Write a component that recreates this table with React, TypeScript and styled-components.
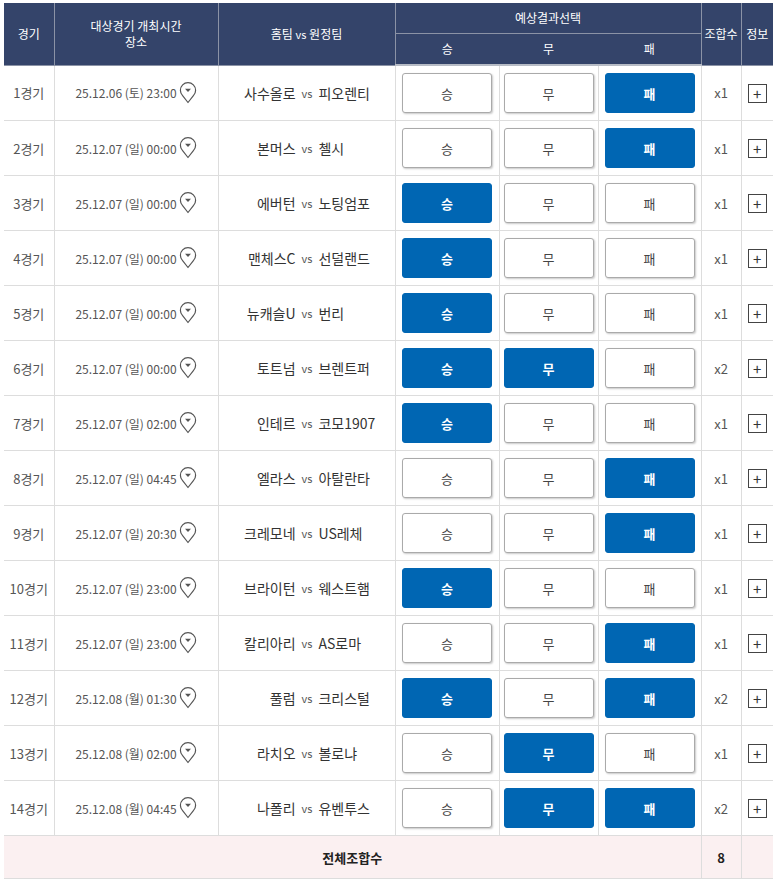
import React from "react";
import styled, { createGlobalStyle } from "styled-components";

type Pick = "win" | "draw" | "lose";

interface Match {
  no: number;
  date: string;
  home: string;
  away: string;
  picks: Pick[];
}

const matches: Match[] = [
  { no: 1, date: "25.12.06 (토) 23:00", home: "사수올로", away: "피오렌티", picks: ["lose"] },
  { no: 2, date: "25.12.07 (일) 00:00", home: "본머스", away: "첼시", picks: ["lose"] },
  { no: 3, date: "25.12.07 (일) 00:00", home: "에버턴", away: "노팅엄포", picks: ["win"] },
  { no: 4, date: "25.12.07 (일) 00:00", home: "맨체스C", away: "선덜랜드", picks: ["win"] },
  { no: 5, date: "25.12.07 (일) 00:00", home: "뉴캐슬U", away: "번리", picks: ["win"] },
  { no: 6, date: "25.12.07 (일) 00:00", home: "토트넘", away: "브렌트퍼", picks: ["win", "draw"] },
  { no: 7, date: "25.12.07 (일) 02:00", home: "인테르", away: "코모1907", picks: ["win"] },
  { no: 8, date: "25.12.07 (일) 04:45", home: "엘라스", away: "아탈란타", picks: ["lose"] },
  { no: 9, date: "25.12.07 (일) 20:30", home: "크레모네", away: "US레체", picks: ["lose"] },
  { no: 10, date: "25.12.07 (일) 23:00", home: "브라이턴", away: "웨스트햄", picks: ["win"] },
  { no: 11, date: "25.12.07 (일) 23:00", home: "칼리아리", away: "AS로마", picks: ["lose"] },
  { no: 12, date: "25.12.08 (월) 01:30", home: "풀럼", away: "크리스털", picks: ["win", "lose"] },
  { no: 13, date: "25.12.08 (월) 02:00", home: "라치오", away: "볼로냐", picks: ["draw"] },
  { no: 14, date: "25.12.08 (월) 04:45", home: "나폴리", away: "유벤투스", picks: ["draw", "lose"] },
];

const options: { key: Pick; label: string }[] = [
  { key: "win", label: "승" },
  { key: "draw", label: "무" },
  { key: "lose", label: "패" },
];

const GlobalStyle = createGlobalStyle`
  body {
    margin: 0;
    padding: 3px 0 0 4px;
    background: #ffffff;
    font-family: "Noto Sans CJK KR", "Noto Sans", sans-serif;
  }
`;

const Table = styled.table`
  width: 769px;
  border-collapse: collapse;
  table-layout: fixed;
  font-size: 13px;
  color: #333;
`;

const HeadCell = styled.th<{ $first?: boolean }>`
  background: #34446a;
  color: #ffffff;
  font-weight: normal;
  font-size: 12px;
  line-height: 16px;
  height: 30px;
  padding: 0;
  border-left: 1px solid #8b93a6;
  border-bottom: 1px solid #8b93a6;
  text-align: center;
  vertical-align: middle;

  &:first-child {
    border-left: ${(p) => (p.$first ? "1px solid #8b93a6" : "none")};
  }
`;

const SubHeadCell = styled(HeadCell)`
  border-left: none;
  border-bottom: 2px solid #b7bcc6;
`;

const Cell = styled.td`
  height: 54px;
  padding: 0;
  border-left: 1px solid #dddddd;
  border-bottom: 1px solid #dddddd;
  text-align: center;
  vertical-align: middle;

  &:first-child {
    border-left: none;
  }
`;

const GameNo = styled(Cell)`
  color: #555;
  font-size: 13px;
`;

const DateText = styled.span`
  display: inline-flex;
  align-items: center;
  gap: 2px;
  color: #555;
  font-size: 12px;
`;

const Teams = styled.div`
  display: grid;
  grid-template-columns: 1fr auto 1fr;
  align-items: center;
  column-gap: 6px;
  color: #333;
  font-size: 14px;
  padding-left: 1px;
`;

const Home = styled.span`
  text-align: right;
  white-space: nowrap;
`;

const Away = styled.span`
  text-align: left;
  white-space: nowrap;
`;

const Vs = styled.span`
  color: #555;
  font-size: 11px;
`;

const PickButton = styled.button<{ $active: boolean }>`
  width: 90px;
  height: 40px;
  border-radius: 3px;
  font-family: inherit;
  font-size: 13px;
  cursor: pointer;
  border: 1px solid ${(p) => (p.$active ? "#0066b3" : "#aaaaaa")};
  background: ${(p) => (p.$active ? "#0066b3" : "#ffffff")};
  color: ${(p) => (p.$active ? "#ffffff" : "#444")};
  font-weight: ${(p) => (p.$active ? "bold" : "normal")};
  box-shadow: ${(p) => (p.$active ? "none" : "1px 1px 2px #c8c8c8")};
`;

const Count = styled(Cell)`
  color: #555;
  font-size: 13px;
`;

const PlusBox = styled.span`
  box-sizing: border-box;
  display: inline-flex;
  align-items: center;
  justify-content: center;
  width: 19px;
  height: 19px;
  border: 1px solid #444;
  color: #333;
  font-size: 15px;
  line-height: 1;
  vertical-align: middle;
`;

const FootCell = styled.td`
  height: 42px;
  padding: 0;
  background: #fbf0f1;
  border-left: 1px solid #dddddd;
  border-bottom: 1px solid #dddddd;
  text-align: center;
  font-weight: bold;
  color: #222;
  font-size: 13px;

  &:first-child {
    border-left: none;
  }
`;

const PinIcon: React.FC = () => (
  <svg width="18" height="22" viewBox="0 0 18 22" fill="none">
    <path
      d="M9 20.5 L3.6 13.6 A7.6 7.6 0 1 1 14.4 13.6 Z"
      stroke="#555"
      strokeWidth="1.2"
      strokeLinejoin="round"
      fill="#fff"
    />
    <path d="M6 6.8 L12 6.8 L9 10 Z" fill="#555" />
  </svg>
);

const App: React.FC = () => {
  return (
    <>
      <GlobalStyle />
      <Table>
        <colgroup>
          <col style={{ width: 50 }} />
          <col style={{ width: 164 }} />
          <col style={{ width: 177 }} />
          <col style={{ width: 104 }} />
          <col style={{ width: 99 }} />
          <col style={{ width: 103 }} />
          <col style={{ width: 40 }} />
          <col style={{ width: 32 }} />
        </colgroup>
        <thead>
          <tr>
            <HeadCell rowSpan={2}>경기</HeadCell>
            <HeadCell rowSpan={2}>
              대상경기 개최시간
              <br />
              장소
            </HeadCell>
            <HeadCell rowSpan={2}>
              홈팀 <Vs style={{ color: "#fff" }}>vs</Vs> 원정팀
            </HeadCell>
            <HeadCell colSpan={3}>예상결과선택</HeadCell>
            <HeadCell rowSpan={2}>조합수</HeadCell>
            <HeadCell rowSpan={2}>정보</HeadCell>
          </tr>
          <tr>
            {options.map((o, i) => (
              <SubHeadCell key={o.key} $first={i === 0}>
                {o.label}
              </SubHeadCell>
            ))}
          </tr>
        </thead>
        <tbody>
          {matches.map((m) => (
            <tr key={m.no}>
              <GameNo>{m.no}경기</GameNo>
              <Cell>
                <DateText>
                  {m.date}
                  <PinIcon />
                </DateText>
              </Cell>
              <Cell>
                <Teams>
                  <Home>{m.home}</Home>
                  <Vs>vs</Vs>
                  <Away>{m.away}</Away>
                </Teams>
              </Cell>
              {options.map((o) => (
                <Cell key={o.key}>
                  <PickButton $active={m.picks.includes(o.key)}>{o.label}</PickButton>
                </Cell>
              ))}
              <Count>x{m.picks.length}</Count>
              <Cell>
                <PlusBox>+</PlusBox>
              </Cell>
            </tr>
          ))}
          <tr>
            <FootCell colSpan={6}>전체조합수</FootCell>
            <FootCell>8</FootCell>
            <FootCell />
          </tr>
        </tbody>
      </Table>
    </>
  );
};

export default App;
